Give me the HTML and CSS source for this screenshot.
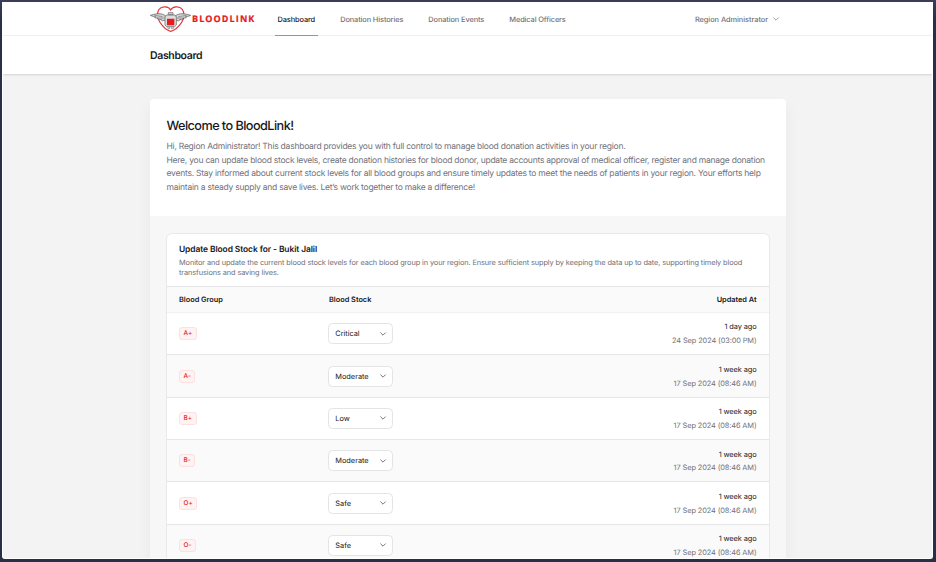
FILE: index.html
```html
<!DOCTYPE html>
<html lang="en">
<head>
<meta charset="utf-8">
<title>Dashboard - BloodLink</title>
<link rel="stylesheet" href="styles.css">
</head>
<body>
<svg width="0" height="0" class="defs"><symbol id="chev" viewBox="0 0 8 8"><path d="M1.4 2.6 4 5.2 6.6 2.6" fill="none" stroke="currentColor" stroke-width=".8"/></symbol></svg>
<div class="window">
  <nav class="nav">
    <a class="logo">
      <svg class="mark" viewBox="0 0 123 78" fill="none">
        <path d="M62 12C56 1 36 -1 27 10 20 20 21 36 30 49 38 61 50 73 62 76 74 73 87 61 95 49 104 36 104 20 97 10 88 -1 68 1 62 12Z" stroke="#e5383b" stroke-width="3.4"/>
        <path d="M46 29C36 21 20 22 1 28 7 31 12 32 17 32 11 34 14 37 25 36 20 40 26 43 34 40 32 45 39 46 46 42ZM77 29C87 21 103 22 122 28 116 31 111 32 106 32 112 34 109 37 98 36 103 40 97 43 89 40 91 45 84 46 77 42Z" fill="#d6d6d6" stroke="#555" stroke-width="2"/>
        <path d="M13 28 38 32M25 36 42 36M110 28 85 32M98 36 81 36" stroke="#777" stroke-width="2"/>
        <path d="M55 20h14v6H55zM49 27h26l4 6v24l-5 5H50l-5-5V33z" fill="#ddd" stroke="#747474" stroke-width="2.5"/>
        <path d="M54 62v6h5v-5m6 0v5h5v-6" stroke="#777" stroke-width="2"/>
        <path d="M51 38h22v20H51z" fill="#e51b20"/>
      </svg>
      <span class="brand">BLOODLINK</span>
    </a>
    <a class="link active">Dashboard</a>
    <a class="link">Donation Histories</a>
    <a class="link">Donation Events</a>
    <a class="link">Medical Officers</a>
    <a class="user"><span>Region Administrator</span><svg class="chev"><use href="#chev"/></svg></a>
  </nav>
  <header class="page-header"><h1>Dashboard</h1></header>
  <main class="card">
    <section class="welcome">
      <h2>Welcome to BloodLink!</h2>
      <p>Hi, Region Administrator! This dashboard provides you with full control to manage blood donation activities in your region.<br>Here, you can update blood stock levels, create donation histories for blood donor, update accounts approval of medical officer, register and manage donation<br>events. Stay informed about current stock levels for all blood groups and ensure timely updates to meet the needs of patients in your region. Your efforts help<br>maintain a steady supply and save lives. Let’s work together to make a difference!</p>
    </section>
    <section class="panel">
      <div class="stock">
        <div class="intro">
          <h3>Update Blood Stock for - Bukit Jalil</h3>
          <p>Monitor and update the current blood stock levels for each blood group in your region. Ensure sufficient supply by keeping the data up to date, supporting timely blood<br>transfusions and saving lives.</p>
        </div>
        <div class="row head"><span>Blood Group</span><span>Blood Stock</span><span class="when">Updated At</span></div>
        <div class="row"><span><b class="badge">A+</b></span><span class="select">Critical<svg class="chev"><use href="#chev"/></svg></span><span class="when">1 day ago<small>24 Sep 2024 (03:00 PM)</small></span></div>
        <div class="row"><span><b class="badge">A-</b></span><span class="select">Moderate<svg class="chev"><use href="#chev"/></svg></span><span class="when">1 week ago<small>17 Sep 2024 (08:46 AM)</small></span></div>
        <div class="row"><span><b class="badge">B+</b></span><span class="select">Low<svg class="chev"><use href="#chev"/></svg></span><span class="when">1 week ago<small>17 Sep 2024 (08:46 AM)</small></span></div>
        <div class="row"><span><b class="badge">B-</b></span><span class="select">Moderate<svg class="chev"><use href="#chev"/></svg></span><span class="when">1 week ago<small>17 Sep 2024 (08:46 AM)</small></span></div>
        <div class="row"><span><b class="badge">O+</b></span><span class="select">Safe<svg class="chev"><use href="#chev"/></svg></span><span class="when">1 week ago<small>17 Sep 2024 (08:46 AM)</small></span></div>
        <div class="row"><span><b class="badge">O-</b></span><span class="select">Safe<svg class="chev"><use href="#chev"/></svg></span><span class="when">1 week ago<small>17 Sep 2024 (08:46 AM)</small></span></div>
      </div>
    </section>
  </main>
</div>
</body>
</html>
```
FILE: styles.css
```css
* { box-sizing: border-box; }
body { margin: 0; height: 562px; padding: 2px 3px 3px 2px; overflow: hidden; background: linear-gradient(#3b3e56, #283047 20px); font-family: Inter, "Liberation Sans", sans-serif; text-rendering: geometricPrecision; color: #18181b; }
.defs { position: absolute; }
h1, h2, h3, p { margin: 0; white-space: nowrap; }
.window { height: 557px; overflow: hidden; background: #f3f3f3; border: 1px solid #fff; border-top: 0; border-radius: 0 0 3px 3px; }
.nav { display: flex; height: 34px; padding-left: 147px; background: #fff; border-bottom: 1px solid #f1f1f2; }
.logo { display: flex; width: 125px; align-items: center; }
.mark { width: 41px; height: 26px; flex: none; }
.brand { margin-left: 1px; padding-top: 1px; font: 700 9px/12px "Open Sans", sans-serif; letter-spacing: 1.1px; color: #e3191e; -webkit-text-stroke: .2px #e3191e; }
.link { display: flex; align-items: center; height: 34px; margin-right: 20.1px; padding: 2px 2.5px 0; font-size: 7.4px; font-weight: 500; letter-spacing: -0.11px; color: #71717a; white-space: nowrap; border-bottom: 1px solid transparent; }
.active { color: #18181b; border-bottom-color: #818cf8; }
.user { display: flex; align-items: center; gap: 4px; margin-left: auto; margin-right: 152px; padding-top: 1px; font-size: 7.4px; font-weight: 500; letter-spacing: -0.05px; color: #71717a; white-space: nowrap; }
.chev { width: 8px; height: 8px; color: #52525b; flex: none; }
.user .chev { color: #85858d; }
.page-header { height: 38px; padding: 2px 0 0 147px; display: flex; align-items: center; background: #fff; box-shadow: 0 1px 2px #0002; }
h1 { font-size: 10.5px; font-weight: 600; line-height: 14px; letter-spacing: -0.35px; }
.card { width: 636px; margin: 25px 0 0 147px; background: #fff; border-radius: 4px; box-shadow: 0 8px 16px #0000000d; }
.welcome { height: 117px; padding: 19px 16.5px 0; }
h2 { font-size: 12.7px; font-weight: 500; line-height: 17px; letter-spacing: -0.56px; }
.welcome p { margin-top: 6px; font-size: 8.5px; line-height: 13.7px; letter-spacing: -0.237px; color: #71717a; }
.panel { padding: 17px 16px; background: #f7f7f7; }
.stock { background: #fff; border: 1px solid #e9e9eb; border-radius: 6px; overflow: hidden; }
.intro { height: 52px; padding: 10px 12px 0; }
h3 { font-size: 8.45px; font-weight: 600; line-height: 13px; letter-spacing: -0.09px; }
.intro p { font-size: 7.4px; line-height: 10.4px; margin-top: 1px; letter-spacing: -0.113px; color: #71717a; }
.row { display: grid; grid-template-columns: 150px 1fr 160px; align-items: center; height: 42.35px; padding: 0 12.5px 0 12px; border-top: 1px solid #e6e6e8; font-size: 7.4px; background: #fff; letter-spacing: -0.03px; }
.row:nth-child(even) { background: #fafafa; }
.row.head { height: 26px; font-weight: 600; }
.row.head + .row { border-top-color: #f1f1f2; }
.badge { display: inline-block; padding: 0 3.6px; font-size: 6.4px; line-height: 11px; font-weight: 500; color: #dc2626; background: #fef2f2; border: 1px solid #fde0e0; border-radius: 3px; }
.select { display: flex; width: 65px; height: 21px; margin-left: -.7px; align-items: center; justify-content: space-between; padding: 0 5.5px 0 6px; background: #fff; border: 1px solid #e4e4e7; border-radius: 4.5px; }
.when { text-align: right; line-height: 13.7px; padding-top: 1px; white-space: nowrap; letter-spacing: -0.1px; }
.head .when { padding: 0; letter-spacing: -0.03px; }
.when small { display: block; font-size: 7.4px; color: #71717a; letter-spacing: -0.11px; }
```
